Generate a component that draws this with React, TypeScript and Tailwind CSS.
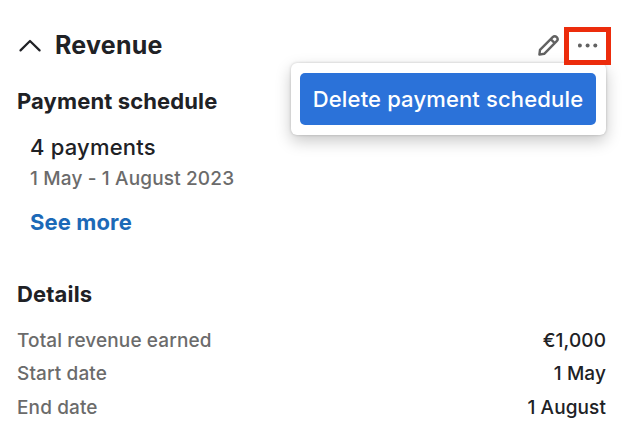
const details = [
  { label: "Total revenue earned", value: "€1,000" },
  { label: "Start date", value: "1 May" },
  { label: "End date", value: "1 August" },
];

const ChevronIcon = () => (
  <svg className="w-6 h-4 ml-px flex-shrink-0" fill="none" viewBox="0 0 24 16" stroke="currentColor" aria-hidden="true">
    <path strokeLinecap="round" strokeLinejoin="round" strokeWidth={2.2} d="M2.5 12.4L12 3L21.6 12.4" />
  </svg>
);

const PencilIcon = () => (
  <svg className="w-6 h-6" fill="none" viewBox="0 0 24 24" stroke="currentColor" aria-hidden="true">
    <path strokeLinecap="round" strokeLinejoin="round" strokeWidth={2.4} d="M3.4 20.6L4 15.8L16.7 3.2a2.8 2.8 0 0 1 4 4L8.2 19.8L3.4 20.6ZM14.7 5.2L18.7 9.2" />
  </svg>
);

const DotsIcon = () => (
  <svg className="w-5 h-2" fill="currentColor" viewBox="0 0 20 8" aria-hidden="true">
    <circle cx="1.9" cy="3.5" r="2" />
    <circle cx="9.6" cy="3.5" r="2" />
    <circle cx="17.3" cy="3.5" r="2" />
  </svg>
);

const ActionsMenu = () => (
  <div className="absolute top-[36px] right-[5px] w-[315px] h-[72px] px-[9px] py-[10px] bg-white rounded-md shadow-[0_6px_16px_rgba(0,0,0,0.22),0_0_3px_rgba(0,0,0,0.2)]">
    <button className="w-[296px] h-[52px] rounded-[5px] bg-[#2b72d9] text-white text-[22px] font-[450] tracking-[0.15px] whitespace-nowrap">
      Delete payment schedule
    </button>
  </div>
);

export default function App() {
  return (
    <div className="h-[446px] bg-white pt-[27px] pl-[17px] pr-[18px] font-['Inter',sans-serif] text-[#202125]">
      <header className="flex items-center h-[38px] -mr-[5px]">
        <ChevronIcon />
        <h1 className="ml-[13px] pb-[2px] text-[25px] leading-[36px] font-[650] tracking-[0.25px]">Revenue</h1>
        <div className="relative flex items-center ml-auto text-[#626262]">
          <button className="mr-[4px]" aria-label="Edit">
            <PencilIcon />
          </button>
          <button className="relative z-10 flex items-center justify-center w-[47px] h-[38px] border-[5px] border-[#ec2c0c] bg-white" aria-label="More actions">
            <DotsIcon />
          </button>
          <ActionsMenu />
        </div>
      </header>

      <section className="mt-[21px]">
        <h2 className="text-[22px] leading-[30px] font-[650] tracking-[0.12px]">Payment schedule</h2>
        <div className="mt-[16px] pl-[13px]">
          <p className="text-[22px] leading-[30px] font-[450] tracking-[0.2px]">4 payments</p>
          <p className="mt-[3px] text-[19px] leading-[27px] font-[450] tracking-[0.15px] text-[#6b6b6b]">1 May - 1 August 2023</p>
          <a href="#" className="block mt-[15px] text-[22px] leading-[30px] font-[650] tracking-[0.12px] text-[#1c69b7]">See more</a>
        </div>
      </section>

      <section className="mt-[42px]">
        <h2 className="text-[22px] leading-[30px] font-[650] tracking-[0.15px]">Details</h2>
        <dl className="mt-[14.5px] text-[19px] leading-[33.5px] font-[450]">
          {details.map(({ label, value }) => (
            <div key={label} className="flex justify-between">
              <dt className="tracking-[0.12px] text-[#6b6b6b]">{label}</dt>
              <dd className="tracking-[0.1px]">{value}</dd>
            </div>
          ))}
        </dl>
      </section>
    </div>
  );
}
